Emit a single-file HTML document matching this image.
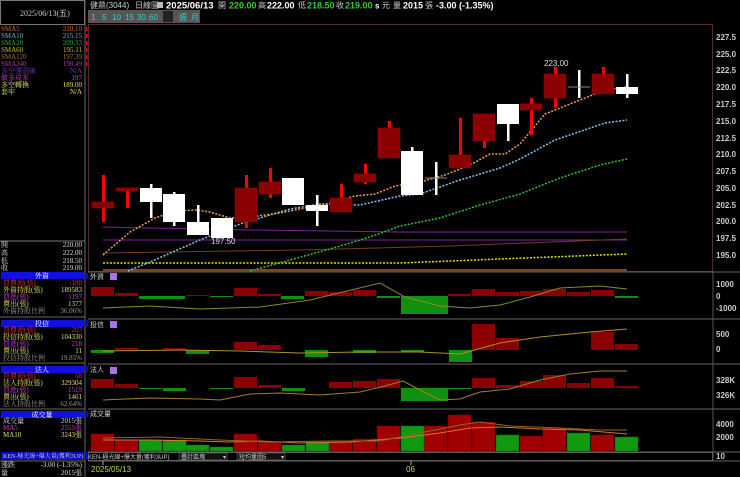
<!DOCTYPE html>
<html><head><meta charset="utf-8"><style>
html,body{margin:0;padding:0;background:#000;width:740px;height:477px;overflow:hidden}
svg{display:block}
text{font-family:"Liberation Sans","Noto Sans CJK TC",sans-serif}
.s text{font-family:"Liberation Serif","Noto Serif CJK SC",serif}
.s{font-size:7px}
</style></head><body>
<svg width="740" height="477" viewBox="0 0 740 477" xmlns="http://www.w3.org/2000/svg">
<rect width="740" height="477" fill="#000"/>
<!-- left panel -->
<rect x="0.5" y="0.5" width="84" height="24" fill="none" stroke="#777"/>
<text x="20" y="16" fill="#ccc" font-size="8" style="font-family:'Liberation Serif',serif">2025/06/13(五)</text>
<line x1="85" y1="0" x2="85" y2="477" stroke="#666"/>
<g class="s">
<text x="1" y="31" fill="#d2691e">SMA5</text><text x="82" y="31" fill="#d2691e" text-anchor="end">220.10</text>
<text x="1" y="38" fill="#6cb4d8">SMA10</text><text x="82" y="38" fill="#6cb4d8" text-anchor="end">215.15</text>
<text x="1" y="45" fill="#2eaa2e">SMA20</text><text x="82" y="45" fill="#2eaa2e" text-anchor="end">209.33</text>
<text x="1" y="52" fill="#c8c800">SMA60</text><text x="82" y="52" fill="#c8c800" text-anchor="end">195.11</text>
<text x="1" y="59" fill="#a07040">SMA120</text><text x="82" y="59" fill="#a07040" text-anchor="end">197.39</text>
<text x="1" y="66" fill="#b030b0">SMA240</text><text x="82" y="66" fill="#b030b0" text-anchor="end">198.49</text>
<text x="1" y="73" fill="#8030c0">多空強弱線</text><text x="82" y="73" fill="#8030c0" text-anchor="end">N/A</text>
<text x="1" y="80" fill="#d040d0">做多成本</text><text x="82" y="80" fill="#d040d0" text-anchor="end">197</text>
<text x="1" y="87" fill="#e0e060">多空轉換</text><text x="82" y="87" fill="#e0e060" text-anchor="end">189.00</text>
<text x="1" y="94" fill="#e0e060">套牢</text><text x="82" y="94" fill="#e0e060" text-anchor="end">N/A</text>
<line x1="0" y1="241" x2="85" y2="241" stroke="#777"/>
<text x="1" y="247" fill="#ddd">開</text><text x="82" y="247" fill="#ddd" text-anchor="end">220.00</text>
<text x="1" y="255" fill="#ddd">高</text><text x="82" y="255" fill="#ddd" text-anchor="end">222.00</text>
<text x="1" y="263" fill="#ddd">低</text><text x="82" y="263" fill="#ddd" text-anchor="end">218.50</text>
<text x="1" y="270" fill="#ddd">收</text><text x="82" y="270" fill="#ddd" text-anchor="end">219.00</text>
<rect x="1" y="272" width="83" height="7" fill="#1010e0"/><text x="42" y="278" fill="#fff" text-anchor="middle">外資</text>
<text x="3" y="285" fill="#e03030">買賣超(張)</text><text x="82" y="285" fill="#e03030" text-anchor="end">-180</text>
<text x="3" y="292" fill="#e0e060">外資持股(張)</text><text x="82" y="292" fill="#e0e060" text-anchor="end">189583</text>
<text x="3" y="299" fill="#d040d0">買進(張)</text><text x="82" y="299" fill="#d040d0" text-anchor="end">1197</text>
<text x="3" y="306" fill="#e0e060">賣出(張)</text><text x="82" y="306" fill="#e0e060" text-anchor="end">1377</text>
<text x="3" y="313" fill="#999">外資持股比例</text><text x="82" y="313" fill="#999" text-anchor="end">36.06%</text>
<line x1="0" y1="317" x2="85" y2="317" stroke="#666"/>
<rect x="1" y="320" width="83" height="7" fill="#1010e0"/><text x="42" y="326" fill="#fff" text-anchor="middle">投信</text>
<text x="3" y="332" fill="#e03030">買賣超(張)</text><text x="82" y="332" fill="#e03030" text-anchor="end">207</text>
<text x="3" y="339" fill="#e0e060">投信持股(張)</text><text x="82" y="339" fill="#e0e060" text-anchor="end">104330</text>
<text x="3" y="346" fill="#d040d0">買進(張)</text><text x="82" y="346" fill="#d040d0" text-anchor="end">218</text>
<text x="3" y="353" fill="#e0e060">賣出(張)</text><text x="82" y="353" fill="#e0e060" text-anchor="end">11</text>
<text x="3" y="360" fill="#999">投信持股比例</text><text x="82" y="360" fill="#999" text-anchor="end">19.85%</text>
<line x1="0" y1="363" x2="85" y2="363" stroke="#666"/>
<rect x="1" y="366" width="83" height="7" fill="#1010e0"/><text x="42" y="372" fill="#fff" text-anchor="middle">法人</text>
<text x="3" y="378" fill="#e03030">買賣超(張)</text><text x="82" y="378" fill="#e03030" text-anchor="end">58</text>
<text x="3" y="385" fill="#e0e060">法人持股(張)</text><text x="82" y="385" fill="#e0e060" text-anchor="end">329304</text>
<text x="3" y="392" fill="#d040d0">買進(張)</text><text x="82" y="392" fill="#d040d0" text-anchor="end">1519</text>
<text x="3" y="399" fill="#e0e060">賣出(張)</text><text x="82" y="399" fill="#e0e060" text-anchor="end">1461</text>
<text x="3" y="406" fill="#999">法人持股比例</text><text x="82" y="406" fill="#999" text-anchor="end">62.64%</text>
<line x1="0" y1="409" x2="85" y2="409" stroke="#666"/>
<rect x="1" y="411" width="83" height="7" fill="#1010e0"/><text x="42" y="417" fill="#fff" text-anchor="middle">成交量</text>
<text x="3" y="423" fill="#ddd">成交量</text><text x="82" y="423" fill="#ddd" text-anchor="end">2015張</text>
<text x="3" y="430" fill="#d040d0">MA5</text><text x="82" y="430" fill="#d040d0" text-anchor="end">2555張</text>
<text x="3" y="437" fill="#e0e060">MA10</text><text x="82" y="437" fill="#e0e060" text-anchor="end">3243張</text>
<rect x="1" y="452" width="83" height="8" fill="#0a0ac8"/><text x="3" y="458" fill="#ccc" font-size="6">KEN-極光線+爆大量(獲利3UP)</text>
<line x1="0" y1="461" x2="85" y2="461" stroke="#666"/>
<text x="1" y="467" fill="#ddd">漲跌</text><text x="82" y="467" fill="#ddd" text-anchor="end">-3.00 (-1.35%)</text>
<text x="1" y="475" fill="#ddd">量</text><text x="82" y="475" fill="#ddd" text-anchor="end">2015張</text>
</g>
<g fill="#e00">
<rect x="86" y="27" width="1.5" height="4"/><rect x="86" y="34" width="1.5" height="4"/><rect x="86" y="41" width="1.5" height="4"/><rect x="86" y="48" width="1.5" height="4"/><rect x="86" y="55" width="1.5" height="4"/><rect x="86" y="62" width="1.5" height="4"/>
</g>
<rect x="85" y="273" width="3" height="6" fill="#00f"/><rect x="85" y="320" width="3" height="6" fill="#00f"/><rect x="85" y="366" width="3" height="6" fill="#00f"/><rect x="85" y="411" width="3" height="6" fill="#00f"/><rect x="85" y="452" width="3" height="8" fill="#00f"/>
<!-- top bar -->
<g font-size="8" fill="#ccc">
<text x="90" y="8">健鼎(3044)</text>
<text x="135" y="8">日線圖</text>
<rect x="157" y="2" width="6" height="6" fill="#bbb"/>
<text x="166" y="8.5" fill="#fff" font-weight="bold" font-size="9.5">2025/06/13</text>
<text x="218" y="8">開</text><text x="229" y="8.5" fill="#2ed12e" font-weight="bold" font-size="9">220.00</text>
<text x="258" y="8">高</text><text x="267" y="8.5" fill="#fff" font-weight="bold" font-size="9">222.00</text>
<text x="298" y="8">低</text><text x="307" y="8.5" fill="#2ed12e" font-weight="bold" font-size="9">218.50</text>
<text x="336" y="8">收</text><text x="345" y="8.5" fill="#2ed12e" font-weight="bold" font-size="9">219.00</text>
<text x="375" y="8.5" fill="#fff" font-weight="bold" font-size="8">s</text><text x="382" y="8">元</text>
<text x="393" y="8">量</text><text x="403" y="8.5" fill="#fff" font-weight="bold" font-size="9">2015</text>
<text x="425" y="8">張</text><text x="436" y="8.5" fill="#fff" font-weight="bold" font-size="9">-3.00 (-1.35%)</text>
</g>
<g font-size="8">
<rect x="88" y="10" width="112" height="13" fill="#555"/>
<g fill="#3cc">
<text x="91" y="20">1</text><text x="102" y="20">5</text><text x="112" y="20">10</text><text x="125" y="20">15</text><text x="137" y="20">30</text><text x="149" y="20">60</text><text x="179" y="20">週</text><text x="191" y="20">月</text>
</g>
<rect x="163" y="11" width="10" height="11" fill="#222"/>
</g>
<rect x="88.5" y="24.5" width="624" height="247" fill="none" stroke="#5a2a3a"/>
<g stroke="#666"><line x1="88" y1="272" x2="740" y2="272"/><line x1="88" y1="319" x2="740" y2="319"/><line x1="88" y1="364" x2="740" y2="364"/><line x1="88" y1="409" x2="740" y2="409"/><line x1="88" y1="452" x2="740" y2="452"/><line x1="88" y1="461" x2="740" y2="461"/></g>
<line x1="713" y1="272" x2="713" y2="461" stroke="#555"/>
<g font-size="8" fill="#ccc" font-weight="bold">
<text x="716" y="40">227.5</text><text x="716" y="57">225.0</text><text x="716" y="73">222.5</text><text x="716" y="90">220.0</text><text x="716" y="107">217.5</text><text x="716" y="124">215.0</text><text x="716" y="141">212.5</text><text x="716" y="157">210.0</text><text x="716" y="174">207.5</text><text x="716" y="191">205.0</text><text x="716" y="208">202.5</text><text x="716" y="224">200.0</text><text x="716" y="241">197.5</text><text x="716" y="258">195.0</text>
<text x="716" y="287">1000</text><text x="716" y="299">0</text><text x="716" y="311">-1000</text>
<text x="716" y="337">500</text><text x="716" y="352">0</text>
<text x="716" y="383">328K</text><text x="716" y="398">326K</text>
<text x="716" y="427">4000</text><text x="716" y="440">2000</text>
<text x="716" y="459">10</text>
</g>
<polyline points="103,227 250,230 400,232 627,232" fill="none" stroke="#8020a0" stroke-width="1"/>
<polyline points="103,240 627,240" fill="none" stroke="#8020a0" stroke-width="1"/>
<polyline points="103,253 300,250 450,246 627,239" fill="none" stroke="#704020" stroke-width="1"/>
<polyline points="103,270 627,270" fill="none" stroke="#a06030" stroke-width="1.5"/>
<polyline points="103,263 400,263 500,259 627,254" fill="none" stroke="#e0e000" stroke-width="1.5" stroke-dasharray="2,1.5"/>
<polyline points="250,271 290,260 330,249 370,237 400,226 440,218 480,205 520,194 560,178 600,165 627,159" fill="none" stroke="#30c030" stroke-width="1.5" stroke-dasharray="2,1.5"/>
<polyline points="128,271 150,262 200,240 240,224 290,209 320,204 360,205 400,196 420,194 460,180 500,168 520,159 555,140 605,123 627,120" fill="none" stroke="#7cc8f0" stroke-width="1.5" stroke-dasharray="2,1.5"/>
<polyline points="103,255 130,232 155,218 176,211 196,210 210,212 230,218 250,217 280,213 310,207 330,203 355,196 375,194 395,186 420,182 445,175 470,165 490,154 505,154 520,144 545,114 580,100 605,90 627,87" fill="none" stroke="#f0a040" stroke-width="1.5" stroke-dasharray="2,1.5"/>
<g fill="#f00">
<rect x="102" y="175" width="3" height="47"/><rect x="126" y="188" width="3" height="20"/><rect x="245" y="175" width="3" height="53"/><rect x="269" y="168" width="3" height="30"/><rect x="340" y="184" width="3" height="28"/><rect x="364" y="164" width="3" height="20"/><rect x="388" y="121" width="3" height="37"/><rect x="459" y="118" width="3" height="50"/><rect x="483" y="114" width="3" height="34"/><rect x="530" y="98" width="3" height="37"/><rect x="554" y="67" width="3" height="41"/><rect x="602" y="67" width="3" height="27"/>
</g>
<g fill="#8b0000" stroke="#a00000" stroke-width="0.5">
<rect x="92" y="202" width="22" height="6"/><rect x="116" y="188" width="22" height="3"/><rect x="235" y="188" width="22" height="34"/><rect x="259" y="182" width="22" height="12"/><rect x="330" y="198" width="22" height="14"/><rect x="354" y="174" width="22" height="8"/><rect x="378" y="128" width="22" height="30"/><rect x="449" y="155" width="22" height="13"/><rect x="473" y="114" width="22" height="27"/><rect x="520" y="104" width="22" height="6"/><rect x="544" y="74" width="22" height="24"/><rect x="592" y="74" width="22" height="20"/>
</g>
<g fill="#fff">
<rect x="150" y="184" width="2.5" height="34"/><rect x="173" y="192" width="2.5" height="34"/><rect x="197" y="205" width="2.5" height="20"/><rect x="221" y="218" width="2.5" height="20"/><rect x="292" y="178" width="2.5" height="27"/><rect x="316" y="195" width="2.5" height="31"/><rect x="411" y="147" width="2.5" height="48"/><rect x="435" y="162" width="2.5" height="33"/><rect x="507" y="104" width="2.5" height="37"/><rect x="578" y="70" width="2.5" height="28"/><rect x="626" y="74" width="2.5" height="24"/>
<rect x="140" y="188" width="22" height="14"/><rect x="163" y="194" width="22" height="28"/><rect x="187" y="222" width="22" height="13"/><rect x="211" y="218" width="22" height="20"/><rect x="282" y="178" width="22" height="27"/><rect x="306" y="205" width="22" height="6"/><rect x="401" y="151" width="22" height="44"/><rect x="497" y="104" width="22" height="20"/><rect x="616" y="87" width="22" height="7"/>
</g>
<line x1="425" y1="178" x2="447" y2="178" stroke="#888"/>
<line x1="568" y1="87" x2="590" y2="87" stroke="#888"/>
<text x="211" y="244" font-size="8" fill="#ddd">197.50</text>
<text x="544" y="66" font-size="8" fill="#ddd">223.00</text>
<g font-size="7" fill="#ccc">
<text x="90" y="279">外資</text><text x="90" y="327">投信</text><text x="90" y="372">法人</text><text x="90" y="416">成交量</text>
</g>
<rect x="110" y="273" width="7" height="7" fill="#b070e0"/><rect x="110" y="321" width="7" height="7" fill="#b070e0"/><rect x="110" y="367" width="7" height="7" fill="#b070e0"/>
<g fill="#8b0000">
<rect x="91" y="287" width="23" height="9"/><rect x="115" y="293" width="23" height="3"/><rect x="186" y="295" width="23" height="1"/><rect x="234" y="288" width="23" height="8"/><rect x="258" y="294" width="23" height="2"/><rect x="305" y="291" width="23" height="5"/><rect x="329" y="292" width="23" height="4"/><rect x="353" y="290" width="23" height="6"/><rect x="448" y="294" width="23" height="2"/><rect x="472" y="289" width="23" height="7"/><rect x="496" y="292" width="23" height="4"/><rect x="520" y="291" width="23" height="5"/><rect x="543" y="289" width="23" height="7"/><rect x="567" y="292" width="23" height="4"/><rect x="591" y="290" width="23" height="6"/>
</g>
<g fill="#109010">
<rect x="139" y="296" width="23" height="3"/><rect x="162" y="296" width="23" height="3"/><rect x="210" y="296" width="23" height="1"/><rect x="281" y="296" width="23" height="3"/><rect x="377" y="296" width="23" height="2"/><rect x="401" y="296" width="47" height="18"/><rect x="615" y="296" width="23" height="2"/>
</g>
<polyline points="103,308 150,306 200,309 260,307 310,300 380,283 405,297 440,306 470,308 500,305 530,297 560,288 600,286 627,289" fill="none" stroke="#8a8a20"/>
<g fill="#8b0000">
<rect x="234" y="342" width="23" height="8"/><rect x="258" y="345" width="23" height="5"/><rect x="472" y="324" width="23" height="26"/><rect x="496" y="338" width="23" height="12"/><rect x="591" y="332" width="23" height="18"/><rect x="615" y="344" width="23" height="6"/><rect x="115" y="348" width="23" height="2"/><rect x="163" y="348" width="23" height="2"/>
</g>
<g fill="#109010">
<rect x="91" y="350" width="23" height="3"/><rect x="186" y="350" width="23" height="4"/><rect x="305" y="350" width="23" height="7"/><rect x="353" y="350" width="23" height="3"/><rect x="449" y="350" width="23" height="12"/><rect x="401" y="350" width="23" height="2"/>
</g>
<polyline points="103,351 180,350 240,351 300,353 360,352 420,352 460,354 500,343 540,337 590,332 627,329" fill="none" stroke="#b09020"/>
<g fill="#8b0000">
<rect x="91" y="379" width="23" height="9"/><rect x="115" y="384" width="23" height="4"/><rect x="234" y="377" width="23" height="11"/><rect x="258" y="385" width="23" height="3"/><rect x="329" y="382" width="23" height="6"/><rect x="353" y="381" width="23" height="7"/><rect x="377" y="379" width="23" height="9"/><rect x="472" y="378" width="23" height="10"/><rect x="496" y="385" width="23" height="3"/><rect x="520" y="381" width="23" height="7"/><rect x="543" y="375" width="23" height="13"/><rect x="567" y="383" width="23" height="5"/><rect x="591" y="378" width="23" height="10"/><rect x="615" y="386" width="23" height="2"/>
</g>
<g fill="#109010">
<rect x="139" y="388" width="23" height="1"/><rect x="163" y="388" width="23" height="3"/><rect x="210" y="388" width="23" height="1"/><rect x="282" y="388" width="23" height="3"/><rect x="401" y="388" width="47" height="13"/><rect x="448" y="388" width="23" height="1"/>
</g>
<polyline points="103,400 150,398 200,399 220,400 250,394 280,393 320,395 360,392 385,386 403,381 420,390 440,400 460,399 480,392 510,389 540,380 570,374 600,371 627,371" fill="none" stroke="#a08020"/>
<g fill="#a00000" stroke="#600" stroke-width="0.5">
<rect x="91" y="434" width="23" height="17"/><rect x="115" y="440" width="23" height="11"/><rect x="234" y="434" width="23" height="17"/><rect x="258" y="442" width="23" height="9"/><rect x="329" y="442" width="23" height="9"/><rect x="353" y="439" width="23" height="12"/><rect x="377" y="426" width="23" height="25"/><rect x="424" y="426" width="23" height="25"/><rect x="448" y="415" width="23" height="36"/><rect x="472" y="422" width="23" height="29"/><rect x="520" y="436" width="23" height="15"/><rect x="543" y="428" width="23" height="23"/><rect x="591" y="435" width="23" height="16"/>
</g>
<g fill="#109a10" stroke="#060" stroke-width="0.5">
<rect x="139" y="440" width="23" height="11"/><rect x="163" y="440" width="23" height="11"/><rect x="186" y="445" width="23" height="6"/><rect x="210" y="447" width="23" height="4"/><rect x="282" y="445" width="23" height="6"/><rect x="306" y="442" width="23" height="9"/><rect x="401" y="426" width="23" height="25"/><rect x="496" y="435" width="23" height="16"/><rect x="567" y="433" width="23" height="18"/><rect x="615" y="437" width="23" height="14"/>
</g>
<polyline points="103,440 150,440 200,441 230,442 260,441 300,443 350,442 400,438 440,433 470,428 500,427 540,429 580,430 627,434" fill="none" stroke="#e07030"/>
<polyline points="103,438 160,437 220,440 270,442 330,441 380,441 420,433 460,425 480,422 510,426 560,428 600,430 627,430" fill="none" stroke="#8a6a20"/>
<g font-size="6" fill="#ccc">
<text x="88" y="459">KEN-極光線+爆大量(獲利3UP)</text>
<rect x="179" y="453" width="48" height="7" fill="#111" stroke="#777" stroke-width="0.5"/><text x="181" y="459">疊計區塊</text><text x="223" y="459">▾</text>
<rect x="237" y="453" width="48" height="7" fill="#111" stroke="#777" stroke-width="0.5"/><text x="239" y="459">短均量圖5</text><text x="281" y="459">▾</text>
</g>
<rect x="88.5" y="452.5" width="624" height="8" fill="none" stroke="#888" stroke-width="0.5"/>
<line x1="103" y1="461" x2="103" y2="465" stroke="#aaa"/><line x1="411" y1="461" x2="411" y2="465" stroke="#aaa"/>
<text x="91" y="472" font-size="8" fill="#d0d040">2025/05/13</text>
<text x="406" y="472" font-size="8" fill="#d0d040">06</text>
</svg>
</body></html>
